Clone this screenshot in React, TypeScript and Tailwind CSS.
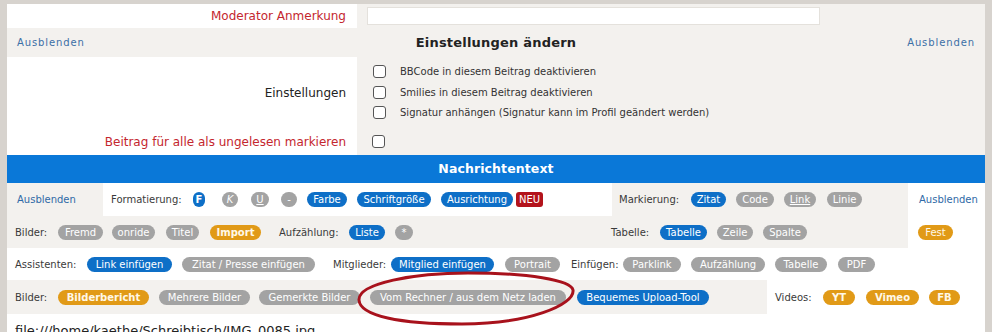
type Item = {
  t: string;
  kind: "label" | "blue" | "gray" | "orange" | "red";
  cls: string;
  bold?: boolean;
  italic?: boolean;
  under?: boolean;
};

const kindCls: Record<Item["kind"], string> = {
  label: "text-[#3a3a3a] text-left",
  blue: "bg-[#0e6fc7] text-white rounded-full text-center",
  gray: "bg-[#a3a3a3] text-white rounded-full text-center",
  orange: "bg-[#e19a17] text-[#fff8e8] rounded-full text-center",
  red: "bg-[#b3131b] text-white rounded-[3px] text-center",
};

function Row({ items }: { items: Item[] }) {
  return (
    <div className="flex items-center">
      {items.map((it, i) => (
        <span
          key={i}
          className={`shrink-0 whitespace-nowrap h-[15px] leading-[15px] text-[10px] ${kindCls[it.kind]} ${it.cls} ${
            it.bold ? "font-bold" : ""
          } ${it.italic ? "italic" : ""} ${it.under ? "underline" : ""}`}
        >
          {it.t}
        </span>
      ))}
    </div>
  );
}

const fmt: Item[] = [
  { t: "Formatierung:", kind: "label", cls: "w-[71px]" },
  { t: "F", kind: "blue", cls: "w-[12px] ml-[11px]", bold: true },
  { t: "K", kind: "gray", cls: "w-[16px] ml-[17px]", italic: true },
  { t: "U", kind: "gray", cls: "w-[18px] ml-[13px]", under: true },
  { t: "-", kind: "gray", cls: "w-[16px] ml-[12px]" },
  { t: "Farbe", kind: "blue", cls: "w-[40px] ml-[10px]" },
  { t: "Schriftgröße", kind: "blue", cls: "w-[74px] ml-[10px]" },
  { t: "Ausrichtung", kind: "blue", cls: "w-[72px] ml-[10px]" },
  { t: "NEU", kind: "red", cls: "w-[27px] ml-[3px]" },
];

const mark: Item[] = [
  { t: "Markierung:", kind: "label", cls: "w-[60px]" },
  { t: "Zitat", kind: "blue", cls: "w-[35px] ml-[12px]" },
  { t: "Code", kind: "gray", cls: "w-[38px] ml-[10px]" },
  { t: "Link", kind: "gray", cls: "w-[32px] ml-[10px]", under: true },
  { t: "Linie", kind: "gray", cls: "w-[35px] ml-[11px]" },
];

const bilder1: Item[] = [
  { t: "Bilder:", kind: "label", cls: "w-[33px]" },
  { t: "Fremd", kind: "gray", cls: "w-[45px] ml-[10px]" },
  { t: "onride", kind: "gray", cls: "w-[43px] ml-[9px]" },
  { t: "Titel", kind: "gray", cls: "w-[33px] ml-[11px]" },
  { t: "Import", kind: "orange", cls: "w-[51px] ml-[11px]", bold: true },
  { t: "Aufzählung:", kind: "label", cls: "w-[60px] ml-[18px]" },
  { t: "Liste", kind: "blue", cls: "w-[36px] ml-[10px]" },
  { t: "*", kind: "gray", cls: "w-[18px] ml-[10px]" },
];

const tabelle: Item[] = [
  { t: "Tabelle:", kind: "label", cls: "w-[40px]" },
  { t: "Tabelle", kind: "blue", cls: "w-[47px] ml-[9px]" },
  { t: "Zeile", kind: "gray", cls: "w-[36px] ml-[10px]" },
  { t: "Spalte", kind: "gray", cls: "w-[44px] ml-[10px]" },
];

const assist: Item[] = [
  { t: "Assistenten:", kind: "label", cls: "w-[61px]" },
  { t: "Link einfügen", kind: "blue", cls: "w-[85px] ml-[11px]" },
  { t: "Zitat / Presse einfügen", kind: "gray", cls: "w-[133px] ml-[10px]" },
  { t: "Mitglieder:", kind: "label", cls: "w-[54px] ml-[18px]" },
  { t: "Mitglied einfügen", kind: "blue", cls: "w-[103px] ml-[4px]" },
  { t: "Portrait", kind: "gray", cls: "w-[55px] ml-[11px]" },
  { t: "Einfügen:", kind: "label", cls: "w-[48px] ml-[11px]" },
  { t: "Parklink", kind: "gray", cls: "w-[58px] ml-[4px]" },
  { t: "Aufzählung", kind: "gray", cls: "w-[74px] ml-[10px]" },
  { t: "Tabelle", kind: "gray", cls: "w-[52px] ml-[10px]" },
  { t: "PDF", kind: "gray", cls: "w-[37px] ml-[11px]" },
];

const bilder2: Item[] = [
  { t: "Bilder:", kind: "label", cls: "w-[32px]" },
  { t: "Bilderbericht", kind: "orange", cls: "w-[91px] ml-[11px]", bold: true },
  { t: "Mehrere Bilder", kind: "gray", cls: "w-[91px] ml-[10px]" },
  { t: "Gemerkte Bilder", kind: "gray", cls: "w-[101px] ml-[9px]" },
  { t: "Vom Rechner / aus dem Netz laden", kind: "gray", cls: "w-[196px] ml-[10px]" },
  { t: "Bequemes Upload-Tool", kind: "blue", cls: "w-[132px] ml-[11px]" },
];

const videos: Item[] = [
  { t: "Videos:", kind: "label", cls: "w-[37px]" },
  { t: "YT", kind: "orange", cls: "w-[32px] ml-[11px]", bold: true },
  { t: "Vimeo", kind: "orange", cls: "w-[53px] ml-[11px]", bold: true },
  { t: "FB", kind: "orange", cls: "w-[31px] ml-[10px]", bold: true },
];

function Box() {
  return <span className="block w-[13px] h-[13px] rounded-[3px] border border-[#555] bg-white shrink-0" />;
}

export default function App() {
  return (
    <div className="relative w-[992px] h-[332px] overflow-hidden bg-[#d7d3ce] px-[7px] pt-[4px] font-['DejaVu_Sans',Verdana,sans-serif]">
      <div className="w-[978px] h-full bg-white">
        {/* Moderator */}
        <div className="flex h-[24px]">
          <div className="w-[350px] text-right pr-[11px] text-[12px] leading-[24px] text-[#c4262e]">Moderator Anmerkung</div>
          <div className="flex-1 bg-[#f3f1ee] pl-[10px] flex items-center">
            <div className="w-[453px] h-[18px] bg-white border border-[#e4e1dc]" />
          </div>
        </div>

        {/* Einstellungen header */}
        <div className="h-[29px] bg-[#f3f1ee] flex items-center justify-between pl-[10px] pr-[10px]">
          <span className="text-[10px] tracking-[0.9px] text-[#3b6fa6]">Ausblenden</span>
          <span className="text-[13px] font-bold tracking-[0.2px] text-[#222]">Einstellungen ändern</span>
          <span className="text-[10px] tracking-[0.9px] text-[#3b6fa6]">Ausblenden</span>
        </div>

        <div className="flex h-[71px]">
          <div className="w-[350px] flex items-center justify-end pr-[11px] text-[12px] text-[#222]">Einstellungen</div>
          <div className="flex-1 bg-[#f3f1ee] pl-[16px] flex flex-col justify-center pb-[1px]">
            {[
              "BBCode in diesem Beitrag deaktivieren",
              "Smilies in diesem Beitrag deaktivieren",
              "Signatur anhängen (Signatur kann im Profil geändert werden)",
            ].map((l) => (
              <div key={l} className="flex items-center h-[20.5px]">
                <Box />
                <span className="ml-[14px] text-[10px] text-[#333]">{l}</span>
              </div>
            ))}
          </div>
        </div>
        <div className="flex h-[27px]">
          <div className="w-[350px] flex items-center justify-end pr-[11px] text-[12px] text-[#c4262e]">
            Beitrag für alle als ungelesen markieren
          </div>
          <div className="flex-1 bg-[#f3f1ee] pl-[15px] flex items-center">
            <Box />
          </div>
        </div>

        {/* Nachrichtentext */}
        <div className="h-[28px] bg-[#0a78d8] flex items-center justify-center text-white font-bold text-[12.5px] tracking-[0.1px]">
          Nachrichtentext
        </div>

        <div className="flex h-[33px]">
          <div className="w-[96px] bg-[#f3f1ee] pl-[10px] flex items-center text-[10px] text-[#2f69a6]">Ausblenden</div>
          <div className="w-[509px] pl-[8px] flex items-center">
            <Row items={fmt} />
          </div>
          <div className="w-[296px] bg-[#f3f1ee] pl-[7px] flex items-center">
            <Row items={mark} />
          </div>
          <div className="flex-1 pl-[11px] flex items-center text-[10px] text-[#2f69a6]">Ausblenden</div>
        </div>

        <div className="flex h-[32px]">
          <div className="w-[596px] bg-[#f3f1ee] pl-[8px] flex items-center">
            <Row items={bilder1} />
          </div>
          <div className="w-[305px] bg-[#f3f1ee] pl-[8px] flex items-center">
            <Row items={tabelle} />
          </div>
          <div className="flex-1 pl-[10px] flex items-center">
            <Row items={[{ t: "Fest", kind: "orange", cls: "w-[35px]" }]} />
          </div>
        </div>

        <div className="h-[32px] pl-[8px] flex items-center">
          <Row items={assist} />
        </div>

        <div className="flex h-[34px]">
          <div className="w-[760px] bg-[#f3f1ee] pl-[8px] flex items-center">
            <Row items={bilder2} />
          </div>
          <div className="flex-1 pl-[8px] flex items-center">
            <Row items={videos} />
          </div>
        </div>

        <div className="pl-[8px] pt-[9px] text-[13px] leading-[16px] text-[#222]">file:///home/kaethe/Schreibtisch/IMG_0085.jpg</div>
      </div>

      {/* hand-drawn annotation */}
      <svg className="absolute left-0 top-0 pointer-events-none" width="992" height="332" viewBox="0 0 992 332">
        <path
          d="M 359 300 C 358 283, 415 273, 468 273 C 528 273, 571 280, 573 290 C 575 305, 528 324, 462 324 C 400 324, 360 316, 359 300 Z"
          fill="none"
          stroke="#a8121c"
          strokeWidth="3"
        />
      </svg>
    </div>
  );
}
